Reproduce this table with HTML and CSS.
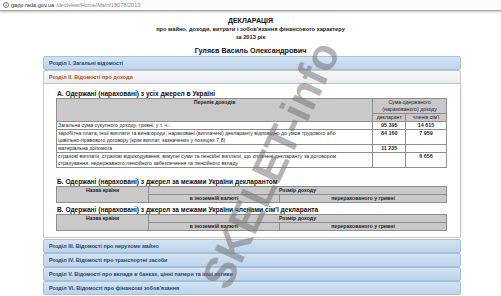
FILE: index.html
```html
<!DOCTYPE html>
<html lang="uk">
<head>
<meta charset="utf-8">
<title>Декларація</title>
<link rel="stylesheet" href="styles.css">
</head>
<body>
<div class="addr">
  <svg class="info-ic" width="6" height="6" viewBox="0 0 12 12"><circle cx="6" cy="6" r="5" fill="none" stroke="#555" stroke-width="1.4"/><rect x="5.3" y="5" width="1.4" height="4" fill="#555"/><rect x="5.3" y="2.8" width="1.4" height="1.4" fill="#555"/></svg>
  <span class="dom">gapp.rada.gov.ua</span><span class="path">/declview/Home/Main/18078/2013</span>
</div>

<div class="doc-head">
  <div class="title">ДЕКЛАРАЦІЯ</div>
  <div class="sub">про майно, доходи, витрати і зобов'язання фінансового характеру</div>
  <div class="sub">за 2013 рік</div>
  <div class="name">Гуляєв Василь Олександрович</div>
</div>

<div class="accordion">
  <div class="acc-h">Розділ I. Загальні відомості</div>
  <div class="acc-h active">Розділ II. Відомості про доходи</div>
  <div class="acc-body">
    <div class="sec-title">А. Одержані (нараховані) з усіх джерел в Україні</div>
    <table class="t t-a">
      <tr>
        <th rowspan="2" class="c1 top">Перелік доходів</th>
        <th colspan="2">Сума одержаного<br>(нарахованого) доходу</th>
      </tr>
      <tr>
        <th class="c2">декларант</th>
        <th class="c3">членів сім'ї</th>
      </tr>
      <tr>
        <td>Загальна сума сукупного доходу, гривні, у т. ч.:</td>
        <td class="num">95 395</td>
        <td class="num">14 615</td>
      </tr>
      <tr>
        <td>заробітна плата, інші виплати та винагороди, нараховані (виплачені) декларанту відповідно до умов трудового або<br>цивільно-правового договору (крім виплат, зазначених у позиціях 7,8)</td>
        <td class="num">84 160</td>
        <td class="num">7 959</td>
      </tr>
      <tr>
        <td>матеріальна допомога</td>
        <td class="num">11 235</td>
        <td class="num"></td>
      </tr>
      <tr>
        <td>страхові виплати, страхові відшкодування, викупні суми та пенсійні виплати, що сплачені декларанту за договором<br>страхування, недержавного пенсійного забезпечення та пенсійного вкладу</td>
        <td class="num"></td>
        <td class="num">6 656</td>
      </tr>
    </table>

    <div class="sec-title">Б. Одержані (нараховані) з джерел за межами України декларантом</div>
    <table class="t t-b">
      <tr>
        <th rowspan="2" class="b1 top">Назва країни</th>
        <th colspan="2">Розмір доходу</th>
      </tr>
      <tr>
        <th class="b2">в іноземній валюті</th>
        <th class="b3">перерахованого у гривні</th>
      </tr>
    </table>

    <div class="sec-title">В. Одержані (нараховані) з джерел за межами України членами сім'ї декларанта</div>
    <table class="t t-b">
      <tr>
        <th rowspan="2" class="b1 top">Назва країни</th>
        <th colspan="2">Розмір доходу</th>
      </tr>
      <tr>
        <th class="b2">в іноземній валюті</th>
        <th class="b3">перерахованого у гривні</th>
      </tr>
    </table>
  </div>
  <div class="acc-h">Розділ III. Відомості про нерухоме майно</div>
  <div class="acc-h">Розділ IV. Відомості про транспортні засоби</div>
  <div class="acc-h">Розділ V. Відомості про вклади в банках, цінні папери та інші активи</div>
  <div class="acc-h">Розділ VI. Відомості про фінансові зобов'язання</div>
</div>

<div class="watermark">SKELET-info</div>
</body>
</html>
```

FILE: styles.css
```css
html, body {
  margin: 0;
  padding: 0;
}
body {
  width: 501px;
  height: 296px;
  overflow: hidden;
  background: #ffffff;
  font-family: "Liberation Sans", Arial, sans-serif;
  color: #1e1e1e;
  position: relative;
}

.addr {
  height: 10px;
  display: flex;
  align-items: center;
  gap: 2px;
  padding-left: 3px;
  font-size: 5.6px;
  border-bottom: 1px solid #a8a8a8;
  box-shadow: 0 1px 2px rgba(0,0,0,0.25);
  background: #fbfbfb;
}
.addr .dom { color: #333; }
.addr .path { color: #8a8a8a; }
.info-ic { display: block; }

.doc-head {
  text-align: center;
  padding-top: 5px;
}
.title {
  font-weight: bold;
  font-size: 7px;
  line-height: 9px;
  color: #111;
}
.sub {
  font-weight: bold;
  font-size: 5.7px;
  line-height: 8px;
  color: #222;
}
.name {
  font-weight: bold;
  font-size: 7.2px;
  line-height: 9px;
  margin-top: 5px;
  color: #111;
}

.accordion {
  margin: 1px 40px 0 43px;
}
.acc-h {
  height: 12px;
  line-height: 12px;
  border: 1px solid #a6c0d9;
  border-radius: 2px;
  background: linear-gradient(#d2e3f3, #bdd4ea);
  color: #23466d;
  font-weight: bold;
  font-size: 5.4px;
  padding-left: 5px;
}
.acc-h.active {
  background: linear-gradient(#f7f7f7, #e9ecef);
  border-color: #c2c8ce;
  color: #a8501c;
  border-radius: 2px 2px 0 0;
}
.acc-body {
  border: 1px solid #c7ccd1;
  border-top: none;
  background: #fff;
  padding: 5px 13px 6px 12px;
  margin-bottom: 1px;
  box-shadow: 1px 0 2px rgba(0,0,0,0.08);
}
.sec-title {
  font-weight: bold;
  font-size: 6.6px;
  line-height: 9px;
  color: #111;
  padding-left: 1px;
}

.t {
  border-collapse: collapse;
  font-size: 5.2px;
  line-height: 7px;
  color: #1e1e1e;
  margin-bottom: 9px;
}
.t th, .t td {
  border: 1px solid #8e8e8e;
  padding: 0 1px;
}
.t th {
  background: #c9c9c9;
  font-weight: normal;
  text-align: center;
}
.t th.top { vertical-align: top; }
.t td { background: #fff; }
.t td.num {
  text-align: center;
  vertical-align: top;
  font-size: 5.4px;
  font-weight: bold;
  color: #2a2a2a;
}
.t-a { width: 391px; }
.t-a .c1 { width: 316px; }
.t-a .c2 { width: 30px; }
.t-a .c3 { width: 38px; }
.t-a th.c1 { font-weight: bold; }

.t-b { width: 391px; margin-bottom: 2px; }
.t-b .b1 { width: 89px; }
.t-b .b2 { width: 128px; }
.t-b th { font-weight: bold; }
.t-b:last-child { margin-bottom: 0; }

.watermark {
  position: absolute;
  left: 271px;
  top: 165px;
  transform: translate(-50%, -50%) rotate(-65deg);
  font-size: 44px;
  font-weight: bold;
  white-space: nowrap;
  color: rgba(115, 115, 115, 0.55);
  pointer-events: none;
}
```
